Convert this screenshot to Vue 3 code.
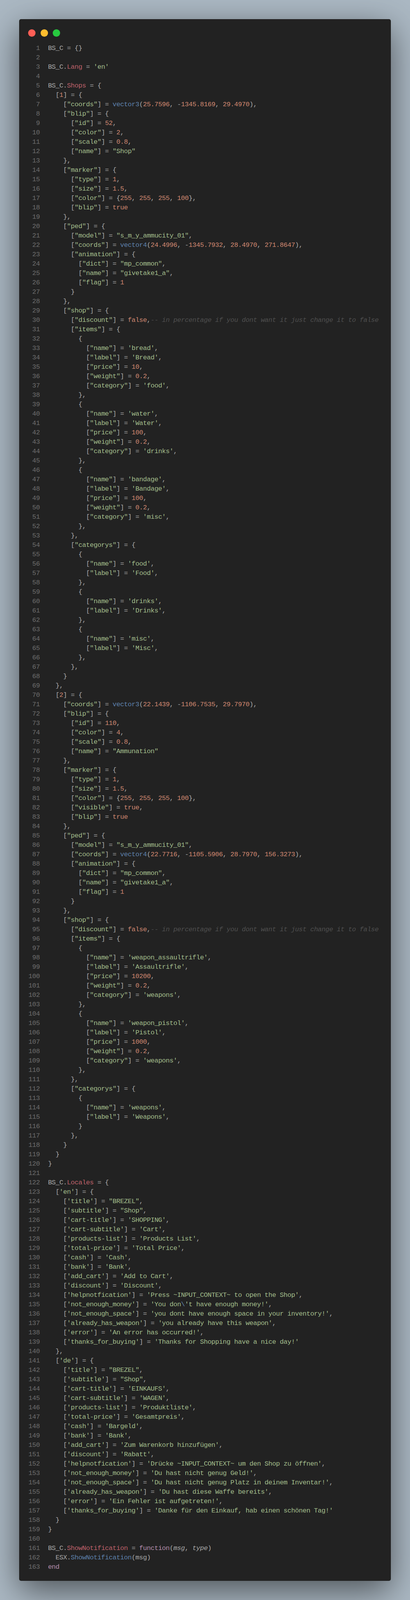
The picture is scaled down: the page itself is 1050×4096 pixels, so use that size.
<script setup>
const source = `BS_C = {}

BS_C.Lang = 'en'

BS_C.Shops = {
  [1] = {
    ["coords"] = vector3(25.7596, -1345.8169, 29.4970),
    ["blip"] = {
      ["id"] = 52,
      ["color"] = 2,
      ["scale"] = 0.8,
      ["name"] = "Shop"
    },
    ["marker"] = {
      ["type"] = 1,
      ["size"] = 1.5,
      ["color"] = {255, 255, 255, 100},
      ["blip"] = true
    },
    ["ped"] = {
      ["model"] = "s_m_y_ammucity_01",
      ["coords"] = vector4(24.4996, -1345.7932, 28.4970, 271.8647),
      ["animation"] = {
        ["dict"] = "mp_common",
        ["name"] = "givetake1_a",
        ["flag"] = 1
      }
    },
    ["shop"] = {
      ["discount"] = false,-- in percentage if you dont want it just change it to false
      ["items"] = {
        {
          ["name"] = 'bread',
          ["label"] = 'Bread',
          ["price"] = 10,
          ["weight"] = 0.2,
          ["category"] = 'food',
        },
        {
          ["name"] = 'water',
          ["label"] = 'Water',
          ["price"] = 100,
          ["weight"] = 0.2,
          ["category"] = 'drinks',
        },
        {
          ["name"] = 'bandage',
          ["label"] = 'Bandage',
          ["price"] = 100,
          ["weight"] = 0.2,
          ["category"] = 'misc',
        },
      },
      ["categorys"] = {
        {
          ["name"] = 'food',
          ["label"] = 'Food',
        },
        {
          ["name"] = 'drinks',
          ["label"] = 'Drinks',
        },
        {
          ["name"] = 'misc',
          ["label"] = 'Misc',
        },
      },
    }
  },
  [2] = {
    ["coords"] = vector3(22.1439, -1106.7535, 29.7970),
    ["blip"] = {
      ["id"] = 110,
      ["color"] = 4,
      ["scale"] = 0.8,
      ["name"] = "Ammunation"
    },
    ["marker"] = {
      ["type"] = 1,
      ["size"] = 1.5,
      ["color"] = {255, 255, 255, 100},
      ["visible"] = true,
      ["blip"] = true
    },
    ["ped"] = {
      ["model"] = "s_m_y_ammucity_01",
      ["coords"] = vector4(22.7716, -1105.5906, 28.7970, 156.3273),
      ["animation"] = {
        ["dict"] = "mp_common",
        ["name"] = "givetake1_a",
        ["flag"] = 1
      }
    },
    ["shop"] = {
      ["discount"] = false,-- in percentage if you dont want it just change it to false
      ["items"] = {
        {
          ["name"] = 'weapon_assaultrifle',
          ["label"] = 'Assaultrifle',
          ["price"] = 10200,
          ["weight"] = 0.2,
          ["category"] = 'weapons',
        },
        {
          ["name"] = 'weapon_pistol',
          ["label"] = 'Pistol',
          ["price"] = 1000,
          ["weight"] = 0.2,
          ["category"] = 'weapons',
        },
      },
      ["categorys"] = {
        {
          ["name"] = 'weapons',
          ["label"] = 'Weapons',
        }
      },
    }
  }
}

BS_C.Locales = {
  ['en'] = {
    ['title'] = "BREZEL",
    ['subtitle'] = "Shop",
    ['cart-title'] = 'SHOPPING',
    ['cart-subtitle'] = 'Cart',
    ['products-list'] = 'Products List',
    ['total-price'] = 'Total Price',
    ['cash'] = 'Cash',
    ['bank'] = 'Bank',
    ['add_cart'] = 'Add to Cart',
    ['discount'] = 'Discount',
    ['helpnotfication'] = 'Press ~INPUT_CONTEXT~ to open the Shop',
    ['not_enough_money'] = 'You don\\'t have enough money!',
    ['not_enough_space'] = 'you dont have enough space in your inventory!',
    ['already_has_weapon'] = 'you already have this weapon',
    ['error'] = 'An error has occurred!',
    ['thanks_for_buying'] = 'Thanks for Shopping have a nice day!'
  },
  ['de'] = {
    ['title'] = "BREZEL",
    ['subtitle'] = "Shop",
    ['cart-title'] = 'EINKAUFS',
    ['cart-subtitle'] = 'WAGEN',
    ['products-list'] = 'Produktliste',
    ['total-price'] = 'Gesamtpreis',
    ['cash'] = 'Bargeld',
    ['bank'] = 'Bank',
    ['add_cart'] = 'Zum Warenkorb hinzufügen',
    ['discount'] = 'Rabatt',
    ['helpnotfication'] = 'Drücke ~INPUT_CONTEXT~ um den Shop zu öffnen',
    ['not_enough_money'] = 'Du hast nicht genug Geld!',
    ['not_enough_space'] = 'Du hast nicht genug Platz in deinem Inventar!',
    ['already_has_weapon'] = 'Du hast diese Waffe bereits',
    ['error'] = 'Ein Fehler ist aufgetreten!',
    ['thanks_for_buying'] = 'Danke für den Einkauf, hab einen schönen Tag!'
  }
}

BS_C.ShowNotification = function(msg, type)
  ESX.ShowNotification(msg)
end`

const pattern =
  /(--.*$)|("[^"]*"|'(?:[^'\\]|\\.)*')|(\bvector[34]\b|(?<=ESX\.)\w+)|((?<=BS_C\.)\w+)|(\b(?:function|end)\b)|(\b(?:true|false)\b|\d+(?:\.\d+)?)|(\b(?:msg|type)\b(?=[,)]))/g

function tokenize(line) {
  const tokens = []
  let last = 0
  const isSignature = line.includes('= function(')
  for (const m of line.matchAll(pattern)) {
    if (m.index > last) tokens.push({ text: line.slice(last, m.index), kind: 'plain' })
    last = m.index + m[0].length
    if (m[1]) tokens.push({ text: m[1], kind: 'comment' })
    else if (m[2]) {
      const parts = m[2].split(/(\\)/)
      for (const p of parts) if (p) tokens.push({ text: p, kind: p === '\\' ? 'call' : 'string' })
    } else if (m[3]) tokens.push({ text: m[3], kind: 'call' })
    else if (m[4]) tokens.push({ text: m[4], kind: 'prop' })
    else if (m[5]) tokens.push({ text: m[5], kind: 'keyword' })
    else if (m[6]) tokens.push({ text: m[6], kind: 'number' })
    else if (m[7]) tokens.push({ text: m[7], kind: isSignature ? 'param' : 'plain' })
  }
  if (last < line.length) tokens.push({ text: line.slice(last), kind: 'plain' })
  return tokens
}

const lines = source.split('\n').map((text, i) => ({ n: i + 1, tokens: tokenize(text) }))
</script>

<template>
  <div class="page">
    <main class="card">
      <div class="controls">
        <span class="dot red"></span>
        <span class="dot yellow"></span>
        <span class="dot green"></span>
      </div>
      <div class="code">
        <div v-for="line in lines" :key="line.n" class="row">
          <span class="ln">{{ line.n }}</span>
          <span class="text"><span v-for="(t, i) in line.tokens" :key="i" :class="t.kind">{{ t.text }}</span></span>
        </div>
      </div>
    </main>
  </div>
</template>

<style scoped>
.page {
  box-sizing: border-box;
  width: 1050px;
  height: 4096px;
  padding: 49.3px;
  background: #abb8c3;
  overflow: hidden;
}
.card {
  box-sizing: border-box;
  width: 951.5px;
  height: 3997.6px;
  padding: 25.3px 0 0 0;
  background: #222222;
  border-radius: 5px;
  box-shadow: 0 25px 86px rgba(0, 0, 0, 0.55);
}
.controls {
  display: flex;
  gap: 12.6px;
  padding-left: 22.7px;
  margin-bottom: 18.9px;
}
.dot {
  width: 19px;
  height: 19px;
  border-radius: 50%;
}
.red { background: #ff5f56; }
.yellow { background: #ffbd2e; }
.green { background: #27c93f; }
.code {
  font-family: "Liberation Mono", monospace;
  font-size: 17px;
  letter-spacing: -0.47px;
  line-height: 24px;
  color: #a9a9a9;
}
.row {
  display: flex;
  gap: 21px;
  height: 24px;
  padding-left: 23.4px;
}
.ln {
  width: 29.2px;
  flex: none;
  text-align: right;
  color: #6d6d6d;
}
.text {
  white-space: pre;
}
.string { color: #a3be8c; }
.number { color: #d08770; }
.prop { color: #bf616a; }
.call { color: #5e81ac; }
.keyword { color: #b48ead; }
.param { font-style: italic; }
.comment { color: #4f4f4f; font-style: italic; }
</style>

<style>
html, body { margin: 0; background: #abb8c3; }
</style>
